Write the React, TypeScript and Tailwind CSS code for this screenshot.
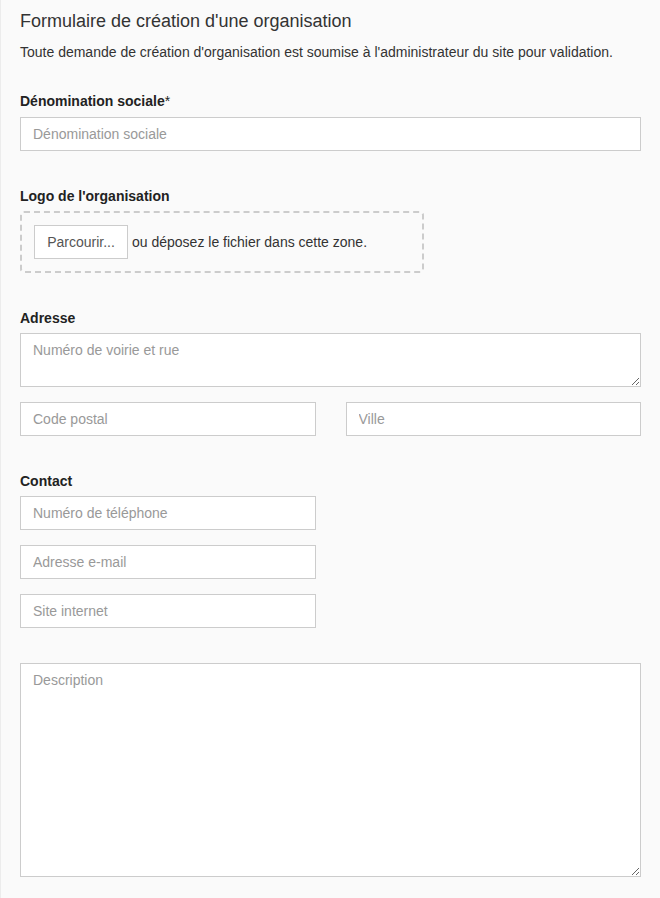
const inputCls =
  'block w-full h-[34px] px-[12px] bg-white border border-[#ccc] text-[14px] text-[#555] placeholder:text-[#999] outline-none';
const areaCls =
  'block w-full px-[12px] py-[6px] bg-white border border-[#ccc] text-[14px] leading-[20px] text-[#555] placeholder:text-[#999] outline-none';

const Label = ({ children }: { children: React.ReactNode }) => (
  <div className="text-[14px] leading-[20px] font-bold text-[#222] mb-[5px]">{children}</div>
);

export default function App() {
  return (
    <div
      className="min-h-[898px] bg-[#fafafa] border-l border-[#ececec] pl-[19px] pr-[19px] pt-[11px] text-[#333]"
      style={{ fontFamily: '"Liberation Sans", Arial, sans-serif' }}
    >
      <h1 className="text-[18px] leading-[20px] font-normal text-[#333]">
        Formulaire de création d'une organisation
      </h1>
      <p className="mt-[11px] text-[14px] leading-[20px]">
        Toute demande de création d'organisation est soumise à l'administrateur du site pour validation.
      </p>

      {/* Dénomination */}
      <div className="mt-[29px]">
        <div className="text-[14px] leading-[20px] font-bold text-[#222] mb-[6px]">
          Dénomination sociale<span className="font-normal">*</span>
        </div>
        <input className={inputCls} placeholder="Dénomination sociale" />
      </div>

      {/* Logo */}
      <div className="mt-[35px]">
        <Label>Logo de l'organisation</Label>
        <div className="w-[404px] border-2 border-dashed border-[#ccc] rounded-[4px] p-[12px] flex items-center">
          <button
            type="button"
            className="h-[34px] w-[94px] bg-white border border-[#ccc] text-[14px] text-[#555]"
          >
            Parcourir...
          </button>
          <span className="ml-[4px] text-[14px] text-[#333]">ou déposez le fichier dans cette zone.</span>
        </div>
      </div>

      {/* Adresse */}
      <div className="mt-[35px]">
        <Label>Adresse</Label>
        <textarea className={`${areaCls} h-[54px]`} placeholder="Numéro de voirie et rue" />
        <div className="mt-[15px] grid grid-cols-2 gap-[30px]">
          <input className={inputCls} placeholder="Code postal" />
          <input className={inputCls} placeholder="Ville" />
        </div>
      </div>

      {/* Contact */}
      <div className="mt-[35px]">
        <Label>Contact</Label>
        <div className="grid grid-cols-2 gap-x-[30px]">
          <div className="flex flex-col gap-[15px]">
            <input className={inputCls} placeholder="Numéro de téléphone" />
            <input className={inputCls} placeholder="Adresse e-mail" />
            <input className={inputCls} placeholder="Site internet" />
          </div>
        </div>
      </div>

      <div className="mt-[35px]">
        <textarea className={`${areaCls} h-[214px]`} placeholder="Description" />
      </div>
    </div>
  );
}
